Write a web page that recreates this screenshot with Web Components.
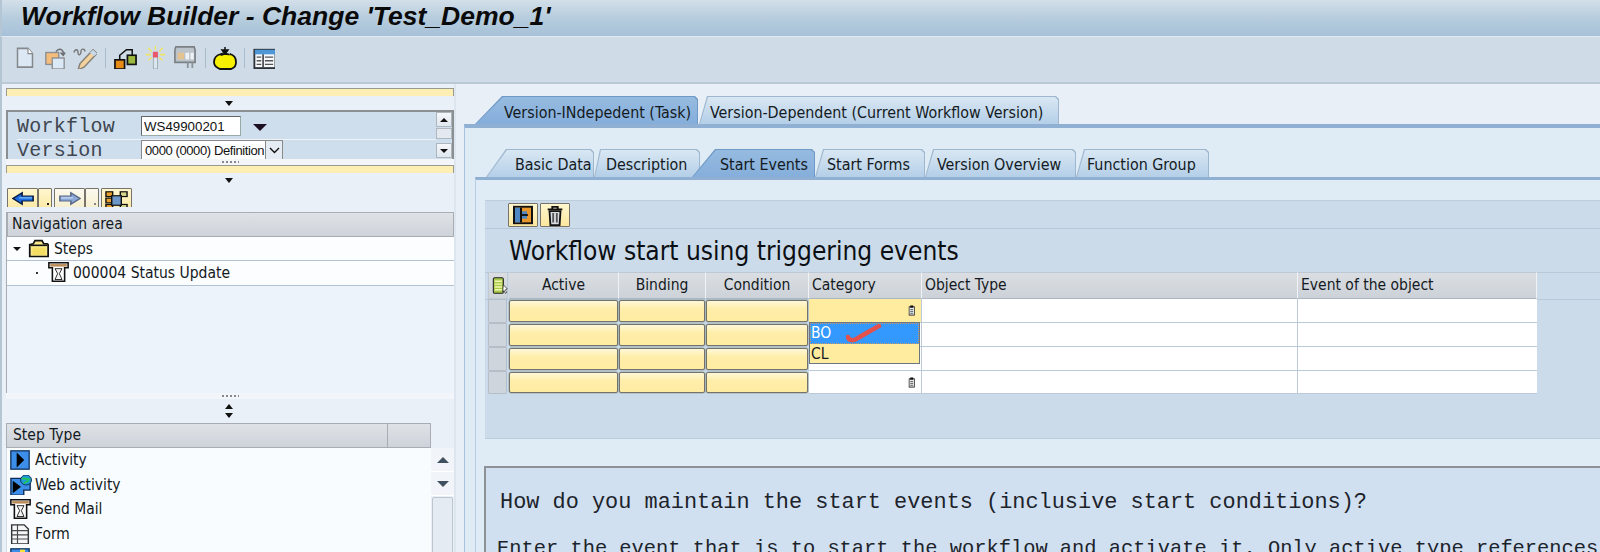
<!DOCTYPE html>
<html lang="en"><head><meta charset="utf-8"><title>Workflow Builder</title>
<style>
html,body{margin:0;height:552px;width:1600px;overflow:hidden;background:#e8eff7;font:14px "DejaVu Sans",sans-serif;font-stretch:condensed;color:#141a22}
.main{display:flex;height:468px}
</style></head><body>
<wb-title>Workflow Builder - Change 'Test_Demo_1'</wb-title>
<wb-toolbar></wb-toolbar>
<div class="main"><wb-left></wb-left><wb-right></wb-right></div>
<script>
const ICONS={
doc:`<path d="M2 1.500h14l6 6V23H2z" fill="#dce9f5" stroke="#85898d" stroke-width="2"/><path d="M16 1.500v6h6" fill="#fff" stroke="#85898d" stroke-width="1.500"/>`,
copy:`<rect x="2" y="6" width="14" height="13" fill="#f4bd7b" stroke="#8b8f93" stroke-width="1.500"/><rect x="9" y="12" width="13" height="12" fill="#dbe9f6" stroke="#8b8f93" stroke-width="1.500"/><path d="M13 5c3-4 7-3 8 1v2m-3-2 3 3 2-3" fill="none" stroke="#6d6f72" stroke-width="1.600"/>`,
pencil:`<path d="M1 6c1-4 4-4 4 0s3 3 3-1 4-3 4 0" fill="none" stroke="#777" stroke-width="1.400"/><path d="M20 3l4 4-13 15-6 3 2-7z" fill="#f3d29b" stroke="#85817a" stroke-width="1.500"/><path d="M20 3l4 4-3 3-4-4z" fill="#c7d9ea"/>`,
tree:`<rect x="1" y="14" width="10" height="10" fill="#e88b16" stroke="#111" stroke-width="1.800"/><rect x="14" y="9" width="9" height="10" fill="#9db83f" stroke="#111" stroke-width="1.800"/><path d="M6 14V9l7-6h6v6" fill="none" stroke="#111" stroke-width="1.600"/>`,
spark:`<rect x="10" y="9" width="5" height="15" fill="#dbe5ee" stroke="#9aa5ad"/><rect x="9.500" y="6" width="6" height="6" fill="#e8586a"/><path d="M12.500 0v4M4 2l4 4M21 2l-4 4M1 9h6M18 9h6M4 15l4-3M21 15l-4-3" stroke="#f1e35e" stroke-width="1.600"/>`,
machine:`<path d="M2 1h20l1 3v13H1V4z" fill="#bcc4cb" stroke="#7b8086" stroke-width="1.800"/><rect x="4" y="7" width="7" height="7" fill="#e5c38f"/><rect x="12.500" y="7" width="4" height="7" fill="#eef2f5"/><rect x="18" y="7" width="3.500" height="7" fill="#eef2f5"/><path d="M15 17v6M20 17v6" stroke="#8c9298" stroke-width="2"/>`,
bomb:`<path d="M12 1v6M9 4l3 4 3-4z" stroke="#111" stroke-width="1.500" fill="#111"/><path d="M8 8c-1 1 1 1 3 0h3c2 1 4 0 3 0 4 1 6 4 6 8 0 3-1 5-3 6l-2 1H7l-2-1c-2-1-4-3-4-6 0-4 3-7 7-8z" fill="#f7f000" stroke="#111" stroke-width="1.800"/>`,
table:`<rect x="1.500" y="3" width="23" height="20" fill="#f6f9fb" stroke="#2d3238" stroke-width="2"/><rect x="2" y="3" width="22" height="5" fill="#4d97d9"/><path d="M11 8v14" stroke="#2d3238" stroke-width="1.600"/><path d="M4 11h5M4 15h5M4 19h5M13 11h9M13 15h9M13 19h9" stroke="#555" stroke-width="1.500"/>`,
folder:`<path d="M6 6l2-4h8l2 4h4l1 1v15H2V7z" fill="#f8e98c" stroke="#111" stroke-width="2"/><path d="M3 8h19" stroke="#111" stroke-width="2"/><path d="M5 11h15v9H5z" fill="#f5dc62"/>`,
mail:`<path d="M1 1h22v6h-4v16H5V7H1z" fill="#fff" stroke="#111" stroke-width="1.800"/><path d="M2.500 2.500h19v3h-19z" fill="#b98a56"/><path d="M8 8h8l-3 6 3 7H8l3-7z" fill="#f2f2f2" stroke="#111"/>`,
activity:`<rect x="1" y="1" width="22" height="22" fill="#3c8ee8" stroke="#0b2a55" stroke-width="1.500"/><path d="M8 3l9 9-9 9z" fill="#000"/>`,
web:`<path d="M1 4h15v6h6v8h-7v6H1z" fill="#3c8ee8" stroke="#0b2a55" stroke-width="1.500"/><path d="M3 7l9 7-9 8z" fill="#000"/><circle cx="17.500" cy="6" r="6" fill="#1c9bd8" stroke="#0b2a55"/><path d="M13 5c3-3 6 2 9 0M15 10l5-3" stroke="#25c35a" stroke-width="2.200" fill="none"/>`,
form:`<path d="M2 1h15l5 5v18H2z" fill="#f4f6f8" stroke="#333" stroke-width="1.700"/><path d="M9 1v23M2 8h20M2 13h20M2 18h20" stroke="#4a4a4a" stroke-width="1.400"/>`,
partial:`<rect x="1" y="1" width="22" height="22" fill="#3c8ee8" stroke="#0b2a55" stroke-width="1.500"/><rect x="12" y="2" width="6" height="7" fill="#f7e23a"/>`,
save:`<rect x="2" y="2" width="20" height="20" fill="#111"/><rect x="4" y="4" width="16" height="16" fill="#e8962a"/><rect x="4" y="4" width="5" height="16" fill="#4f87c4"/><rect x="9" y="4" width="2" height="16" fill="#111"/><rect x="11" y="8" width="5" height="8" fill="#4f87c4"/><rect x="11" y="11" width="6" height="2" fill="#111"/>`,
trash:`<path d="M6 7h12l-1 16H7z" fill="#d8dde2" stroke="#111" stroke-width="2"/><path d="M4 5h16M9 5V2h6v3" fill="none" stroke="#111" stroke-width="2"/><path d="M10 9v11M14 9v11" stroke="#555" stroke-width="2"/>`,
backward:`<path d="M1 12l10-9v5h12v8H11v5z" fill="#1a6ce0" stroke="#0a1c44" stroke-width="1.800"/><path d="M8 11h14" stroke="#7db8f2" stroke-width="2"/>`,
forward:`<path d="M23 12l-10-9v5H1v8h12v5z" fill="#8ba8d8" stroke="#5a6a88" stroke-width="1.800"/><path d="M2 11h13" stroke="#c9d9f1" stroke-width="2"/>`,
nodes:`<rect x="1" y="1" width="7" height="6" fill="#e8a02c" stroke="#111" stroke-width="1.500"/><rect x="16" y="1" width="7" height="6" fill="#d6d68c" stroke="#111" stroke-width="1.500"/><rect x="1" y="9" width="7" height="6" fill="#e8a02c" stroke="#111" stroke-width="1.500"/><rect x="1" y="17" width="7" height="6" fill="#e8a02c" stroke="#111" stroke-width="1.500"/><rect x="16" y="17" width="7" height="6" fill="#d6d68c" stroke="#111" stroke-width="1.500"/><rect x="7" y="6" width="10" height="12" fill="#6d96c8" stroke="#111" stroke-width="1.500"/>`,
listsel:`<rect x="2" y="1" width="15" height="22" rx="2" fill="#a7c94a" stroke="#222" stroke-width="1.600"/><path d="M4 6h11M4 10h11M4 14h11M4 18h11" stroke="#f3f7b0" stroke-width="2"/><path d="M17 11l6 6-3 1 2 4-2 1-2-4-2 2z" fill="#fff" stroke="#222"/>`,
help:`<rect x="3" y="4" width="14" height="18" fill="#eef1f4" stroke="#222" stroke-width="2"/><rect x="6" y="1" width="8" height="5" fill="#111"/><path d="M6 10h8M6 14h8M6 18h8" stroke="#444" stroke-width="2"/>`
};
const CSS_BOX=':host{display:block;box-sizing:border-box}*{box-sizing:border-box}';
function define(name,html){customElements.define(name,class extends HTMLElement{constructor(){super();this.attachShadow({mode:'open'}).innerHTML=html;}})}

class WbIcon extends HTMLElement{connectedCallback(){const s=this.getAttribute('size')||24,h=this.getAttribute('h')||s;
 if(!this.shadowRoot)this.attachShadow({mode:'open'}).innerHTML=`<style>:host{display:inline-flex;flex:none;line-height:0}</style><svg xmlns="http://www.w3.org/2000/svg" width="${s}" height="${h}" viewBox="0 0 24 24" preserveAspectRatio="none">${ICONS[this.getAttribute('name')]||''}</svg>`;}}
customElements.define('wb-icon',WbIcon);

define('wb-title',`<style>${CSS_BOX}:host{height:37px;padding-left:19px;border-left:2px solid #b4c5d3;background:linear-gradient(#d3dfe9,#b9cede 45%,#a6c1d8);border-bottom:1px solid #e0e9f0;font:italic bold 26.500px/32px "Liberation Sans",sans-serif;color:#0a0a0a;white-space:nowrap}</style><slot></slot>`);

define('wb-toolbar',`<style>${CSS_BOX}:host{height:47px;display:flex;align-items:center;padding:0 0 4px 8px;border-left:2px solid #b4c5d3;background:#cfdce7;border-bottom:2px solid #b9c9d6}
.b{width:30px;display:flex;justify-content:center}
.s{width:10px;display:flex;justify-content:center}.s i{width:1px;height:20px;background:#a9bccb}
</style>
<div class="b"><wb-icon name="doc" size="18" h="21"></wb-icon></div><div class="b"><wb-icon name="copy" size="22"></wb-icon></div><div class="b"><wb-icon name="pencil" size="24" h="22"></wb-icon></div>
<div class="s"><i></i></div>
<div class="b"><wb-icon name="tree" size="23" h="22"></wb-icon></div><div class="b"><wb-icon name="spark" size="20" h="23"></wb-icon></div><div class="b"><wb-icon name="machine" size="22" h="23"></wb-icon></div>
<div class="s"><i></i></div>
<div class="b"><wb-icon name="bomb" size="24" h="24"></wb-icon></div>
<div class="s" style="margin-left:-1px"><i></i></div>
<div class="b"><wb-icon name="table" size="22"></wb-icon></div>`);

define('wb-arrow',`<style>:host{display:inline-block;width:0;height:0;border-left:4px solid transparent;border-right:4px solid transparent;border-top:5px solid #111}:host([up]){border-top:0;border-bottom:5px solid #111}</style>`);
define('wb-strip',`<style>${CSS_BOX}:host{height:8px;background:#fdeeb4;border:1px solid #9a9a90;border-width:1px 1px 0}</style>`);
define('wb-arrowrow',`<style>${CSS_BOX}:host{display:flex;justify-content:center;align-items:center;padding-right:2px}</style><slot></slot>`);
define('wb-sash',`<style>${CSS_BOX}:host{height:6px;background:#f2f6fa;display:flex;justify-content:center;align-items:center}i{width:17px;height:2px;background:repeating-linear-gradient(90deg,#888 0 2px,transparent 2px 4px)}</style><i></i>`);
define('wb-btn',`<style>${CSS_BOX}:host{display:flex;align-items:center;justify-content:center;background:linear-gradient(#fff7cf,#fbe79e);border:1px solid #77736a;border-radius:1px;height:20px}</style><slot></slot>`);
define('wb-gridhead',`<style>${CSS_BOX}:host{background:linear-gradient(#dfe2e6,#ced3da);border:1px solid #a9adb3;padding-left:4px;height:25px;line-height:22px;font-size:15.500px;color:#141a22}</style><slot></slot>`);
define('wb-tree-row',`<style>${CSS_BOX}:host{height:24px;background:#fbfdff;border-bottom:1px solid #b2c2d2;display:flex;align-items:center;font-size:15.500px;white-space:nowrap}</style><slot></slot>`);
define('wb-scroll-btn',`<style>${CSS_BOX}:host{display:flex;align-items:center;justify-content:center;background:linear-gradient(#f5f8fb,#dfe7ef);border:1px solid #aeb6bd}</style><slot></slot>`);
define('wb-step',`<style>${CSS_BOX}:host{height:24.500px;display:flex;align-items:center;gap:3px;padding-left:3px;font-size:15.400px;white-space:nowrap}::slotted(wb-icon){width:22px}</style><slot name="i"></slot><slot></slot>`);

define('wb-left',`<style>${CSS_BOX}:host{width:456px;height:468px;flex:none;background:#e9f0f7;border-left:2px solid #b4c5d3;padding:4px 0 0 4px;overflow:hidden;display:flex;flex-direction:column;border-right:2px solid #dde6ee}
.w{width:448px;flex:none}
.ar{height:14px}
.ar2{height:15px}
.wf{height:49px;background:#cfdeec;border:2px solid #8c8f92;border-bottom:0;display:flex;padding-left:9px}
.lab{font:20px/30px "Liberation Mono",monospace;color:#3f4650;width:124px;letter-spacing:.25px}
.wfl{flex:1;display:flex;flex-direction:column}
.r{height:28px;flex:none;display:flex;align-items:flex-start;border-bottom:1px solid #eef3f8}.r+.r{height:19px;border:0}
.r+.r .lab{line-height:22px}
.inp{margin-top:4px;width:100px;height:20px;background:#fff;border:1px solid #9aa;border-top-color:#666;border-left-color:#666;font:13.300px/19px "Liberation Sans";padding-left:2px;color:#111}
.sel{width:142px;height:20px;background:#fff;border:1px solid #8a8a8a;display:flex;font:13px/19px "Liberation Sans",sans-serif;padding-left:3px;justify-content:space-between;white-space:nowrap;color:#111;letter-spacing:-.4px}
.sel b{width:17px;flex:none;border-left:1px solid #888;background:#e5ecf3;display:flex;align-items:center;justify-content:center}
.drop{margin:12px 0 0 12px;border-left:7px solid transparent;border-right:7px solid transparent;border-top:7px solid #1c1020;height:0}
.sb{width:16px;display:flex;flex-direction:column;margin-left:auto}
.sb wb-scroll-btn{height:15px;flex:none}.sb .t{height:11px;flex:none;background:#e3e9ef;border:1px solid #b0b8bf;margin:1px 0 4px}
.btns{height:19px;display:flex;overflow:hidden;margin-left:1px}
.btns wb-btn{flex:none;height:24px;align-items:flex-start;padding-top:2px;position:relative}
.d{position:absolute;right:2px;top:14px;width:2px;height:2px;background:#222}
.gap{height:5px;flex:none}
.nav{height:181px;background:#edf3fa;border-left:1px solid #a9adb3}
.mk{width:0;height:0;border-left:4px solid transparent;border-right:4px solid transparent;border-top:4px solid #111;margin:0 7px 0 6px}
.dot{width:2px;height:2px;background:#333;margin:0 10px 0 29px}
.bar{height:24px;display:flex;flex-direction:column;align-items:center;justify-content:center;gap:4px;padding-right:2px}
.st{display:flex;height:130px}
.stl{width:425px}.list{background:#f9fcff;height:105px;border-left:1px solid #d5dee6;overflow:hidden}
.cols{display:flex}.cols wb-gridhead:first-child{width:382px;padding-left:6px}.cols wb-gridhead:last-child{width:43px;border-left:0}
.sr{width:23px;display:flex;flex-direction:column;padding-top:25px}
.sr .x{height:24px;flex:none;background:#f1f5f9;border-bottom:1px solid #fff;display:flex;align-items:center;justify-content:center}
.sr .tt{margin:1px 1px 0;height:70px;flex:none;background:#e4ebf2;border:1px solid #bcc6cf;border-radius:2px}
.tri-u{border-left:6px solid transparent;border-right:6px solid transparent;border-bottom:6px solid #40505e}
.tri-d{border-left:6px solid transparent;border-right:6px solid transparent;border-top:6px solid #40505e}
</style>
<wb-strip class="w"></wb-strip>
<wb-arrowrow class="w ar"><wb-arrow></wb-arrow></wb-arrowrow>
<div class="wf w"><div class="wfl">
 <div class="r"><div class="lab">Workflow</div><div class="inp">WS49900201</div><div class="drop"></div></div>
 <div class="r"><div class="lab">Version</div><div class="sel"><span>0000 (0000) Definition</span><b><svg width="11" height="7" viewBox="0 0 11 7"><path d="M1 1l4.500 4.500L10 1" fill="none" stroke="#111" stroke-width="1.400"/></svg></b></div></div>
 </div><div class="sb"><wb-scroll-btn><wb-arrow up style="border-bottom-width:4px"></wb-arrow></wb-scroll-btn><div class="t"></div><wb-scroll-btn><wb-arrow style="border-top-width:4px"></wb-arrow></wb-scroll-btn></div></div>
<wb-sash class="w"></wb-sash>
<wb-strip class="w"></wb-strip>
<wb-arrowrow class="w ar2"><wb-arrow></wb-arrow></wb-arrowrow>
<div class="btns w">
 <wb-btn style="width:31px"><wb-icon name="backward" size="22" h="15"></wb-icon></wb-btn><wb-btn style="width:14px;margin-right:2px"><i class="d"></i></wb-btn>
 <wb-btn style="width:31px;background:linear-gradient(#fbfaef,#f5edc9)"><wb-icon name="forward" size="22" h="15"></wb-icon></wb-btn><wb-btn style="width:14px;margin-right:2px;background:linear-gradient(#fbfaef,#f5edc9)"><i class="d" style="background:#888"></i></wb-btn>
 <wb-btn style="width:31px"><wb-icon name="nodes" size="23" h="19"></wb-icon></wb-btn>
</div>
<div class="gap"></div>
<div class="nav w">
 <wb-gridhead>Navigation area</wb-gridhead>
 <wb-tree-row><i class="mk"></i><wb-icon name="folder" size="21" h="19"></wb-icon><span style="margin-left:5px">Steps</span></wb-tree-row>
 <wb-tree-row style="height:25px"><i class="dot"></i><wb-icon name="mail" size="21" h="20" style="margin-top:-3px"></wb-icon><span style="margin-left:4px">000004 Status Update</span></wb-tree-row>
</div>
<wb-sash class="w"></wb-sash>
<div class="bar w"><wb-arrow up></wb-arrow><wb-arrow></wb-arrow></div>
<div class="st w"><div class="stl"><div class="cols"><wb-gridhead>Step Type</wb-gridhead><wb-gridhead></wb-gridhead></div>
 <div class="list">
 <wb-step><wb-icon slot="i" name="activity" size="20"></wb-icon>Activity</wb-step>
 <wb-step><wb-icon slot="i" name="web" size="22" h="20"></wb-icon>Web activity</wb-step>
 <wb-step><wb-icon slot="i" name="mail" size="21" h="20"></wb-icon>Send Mail</wb-step>
 <wb-step><wb-icon slot="i" name="form" size="20"></wb-icon>Form</wb-step>
 <wb-step><wb-icon slot="i" name="partial" size="20"></wb-icon></wb-step>
 </div></div>
 <div class="sr"><div class="x"><i class="tri-u"></i></div><div class="x"><i class="tri-d"></i></div><div class="tt"></div></div>
</div>`);

define('wb-tab',`<style>${CSS_BOX}:host{position:relative;display:block;flex:none;height:28px;--s:8px;--f:linear-gradient(#d9e7f3,#b4cfe8);--b:#9db7cf;white-space:nowrap;font-size:15.900px;line-height:31px}
:host([active]){--f:linear-gradient(#96bbe0,#85aedb);--b:#6f99c6;z-index:1}
.o,.i{position:absolute;inset:0;clip-path:polygon(0 100%,var(--s) 0,calc(100% - 3px) 0,100% 3px,100% 100%)}
.o{background:var(--b)}.i{inset:1px 1px 0 1px;background:var(--f)}
.t{position:relative}</style><div class="o"></div><div class="i"></div><div class="t"><slot></slot></div>`);
define('wb-tabstrip',`<style>${CSS_BOX}:host{display:flex;align-items:flex-end}</style><slot></slot>`);

define('wb-table',`<style>${CSS_BOX}:host{display:grid;grid-template-columns:21px 110px 87px 103px 113px 376px 239px;grid-template-rows:27px repeat(3,24px) 23px;width:1049px;position:relative;font-size:15.500px;white-space:nowrap}
.h{background:linear-gradient(#dadee2,#cdd2d9);border-right:1px solid #f0f3f6;border-bottom:1px solid #aab6c2;border-top:1px solid #bcc8d3;line-height:25px;padding-left:3px}
.c{text-align:center;padding:0}
.sl{background:linear-gradient(#dadee2,#cfd4da);display:flex;align-items:center;justify-content:center;border:1px solid #bfc9d3;margin-right:1px}
.rs{background:#cfd5dc;border:1px solid #b4bec9;margin-right:2px;border-radius:1px}
.y{background:linear-gradient(#fff8d8,#ffeea9 40%,#ffeca4);border:1px solid #74726b;border-radius:2px;margin:1px 1px 1px 0;box-shadow:0 0 0 .5px #9aa}
.w{background:#fff;border-bottom:1px solid #bcc9d8;border-right:1px solid #bcc9d8;display:flex;align-items:center;justify-content:flex-end;padding-right:4px}
.w.ye{background:#ffec9e}
.last{border-right:0}
.dd{position:absolute;left:321px;top:50px;width:111px;height:42px;border:1px solid #6d7680;background:#ffec9e;line-height:21px;z-index:2}
.dd div{height:21px;padding-left:1px}.dd .on{background:#3399ff;color:#fff;outline:1px dotted #c96;outline-offset:-1px}
.chk{position:absolute;left:36px;top:1px}
</style>
<div class="h sl"><wb-icon name="listsel" size="16" h="17"></wb-icon></div><div class="h c">Active</div><div class="h c">Binding</div><div class="h c">Condition</div><div class="h">Category</div><div class="h">Object Type</div><div class="h">Event of the object</div>
<div class="rs"></div><div class="y"></div><div class="y"></div><div class="y"></div><div class="w ye"><wb-icon name="help" size="9" h="11"></wb-icon></div><div class="w"></div><div class="w last"></div>
<div class="rs"></div><div class="y"></div><div class="y"></div><div class="y"></div><div class="w"></div><div class="w"></div><div class="w last"></div>
<div class="rs"></div><div class="y"></div><div class="y"></div><div class="y"></div><div class="w"></div><div class="w"></div><div class="w last"></div>
<div class="rs"></div><div class="y"></div><div class="y"></div><div class="y"></div><div class="w"><wb-icon name="help" size="9" h="11"></wb-icon></div><div class="w"></div><div class="w last"></div>
<div class="dd"><div class="on">BO</div><div>CL</div><svg class="chk" width="40" height="20" viewBox="0 0 40 20"><path d="M2 13c1 4 6 4 10 1L24 7 33 2" fill="none" stroke="#e4504a" stroke-width="4.500" stroke-linecap="round"/></svg></div>`);

define('wb-section',`<style>${CSS_BOX}:host{height:239px;background:#cbdbe9;border-top:1px solid #bccddb;border-bottom:1px solid #bccddb}
.tb{height:28px;padding:2px 0 0 23px;display:flex;gap:2px;border-bottom:1px solid #b6c9d9}
.tb wb-btn{width:30px;height:24px}
.ti{height:43px;padding-left:24px;font-size:26.070px;line-height:44px;white-space:nowrap;color:#0b0f14}
.tw{padding-left:3px;background:linear-gradient(#b7cadb,#b7cadb) 0 27px/100% 1px no-repeat,linear-gradient(#b7cadb,#b7cadb) 0 0/100% 1px no-repeat}
</style>
<div class="tb"><wb-btn><wb-icon name="save" size="24" h="22"></wb-icon></wb-btn><wb-btn><wb-icon name="trash" size="22" h="21"></wb-icon></wb-btn></div>
<div class="ti">Workflow start using triggering events</div>
<div class="tw"><wb-table></wb-table></div>`);

define('wb-help',`<style>${CSS_BOX}:host{height:90px;margin-left:-1px;background:#d0e0f0;border:2px solid #8c9296;border-right:0;border-bottom:0;overflow:hidden;font-family:"Liberation Mono",monospace;white-space:nowrap;color:#1d232b}
.q{font-size:21.900px;line-height:26px;padding:22px 0 0 14px}
.p{font-size:20.400px;line-height:24px;padding:21px 0 0 11px}</style>
<div class="q">How do you maintain the start events (inclusive start conditions)?</div>
<div class="p">Enter the event that is to start the workflow and activate it. Only active type references</div>`);

define('wb-right',`<style>${CSS_BOX}:host{flex:1;min-width:0;height:468px;overflow:hidden;padding:12px 0 0 8px;background:#e8eff7}
.outer{background:#dfebf5;border-top:4px solid #8fb0d3;border-left:1px solid #a7c2dd;height:428px;padding:21px 0 0 10px}
.inner{border-top:3px solid #8fb0d3;border-left:1px solid #b5cce1;background:#dfebf5;padding:20px 0 0 9px;height:400px}
wb-tabstrip.a{padding-left:11px;height:28px}
wb-tabstrip.a wb-tab{line-height:33px}
wb-tabstrip.b{padding-left:11px;height:28px}
.sp{height:27px}
</style>
<wb-tabstrip class="a">
 <wb-tab active style="width:223px;--s:27px;padding-left:29px">Version-INdepedent (Task)</wb-tab>
 <wb-tab style="width:360px;margin-left:1px;padding-left:11px">Version-Dependent (Current Workflow Version)</wb-tab>
</wb-tabstrip>
<div class="outer">
 <wb-tabstrip class="b">
  <wb-tab style="width:108px;--s:20px;padding-left:29px">Basic Data</wb-tab>
  <wb-tab style="width:106px;--s:6px;padding-left:12px">Description</wb-tab>
  <wb-tab active style="width:123px;--s:23px;margin-left:-8px;padding-left:28px">Start Events</wb-tab>
  <wb-tab style="width:110px;padding-left:12px">Start Forms</wb-tab>
  <wb-tab style="width:151px;padding-left:12px">Version Overview</wb-tab>
  <wb-tab style="width:133px;padding-left:11px">Function Group</wb-tab>
 </wb-tabstrip>
 <div class="inner"><wb-section></wb-section><div class="sp"></div><wb-help></wb-help></div>
</div>`);
</script>
</body></html>
